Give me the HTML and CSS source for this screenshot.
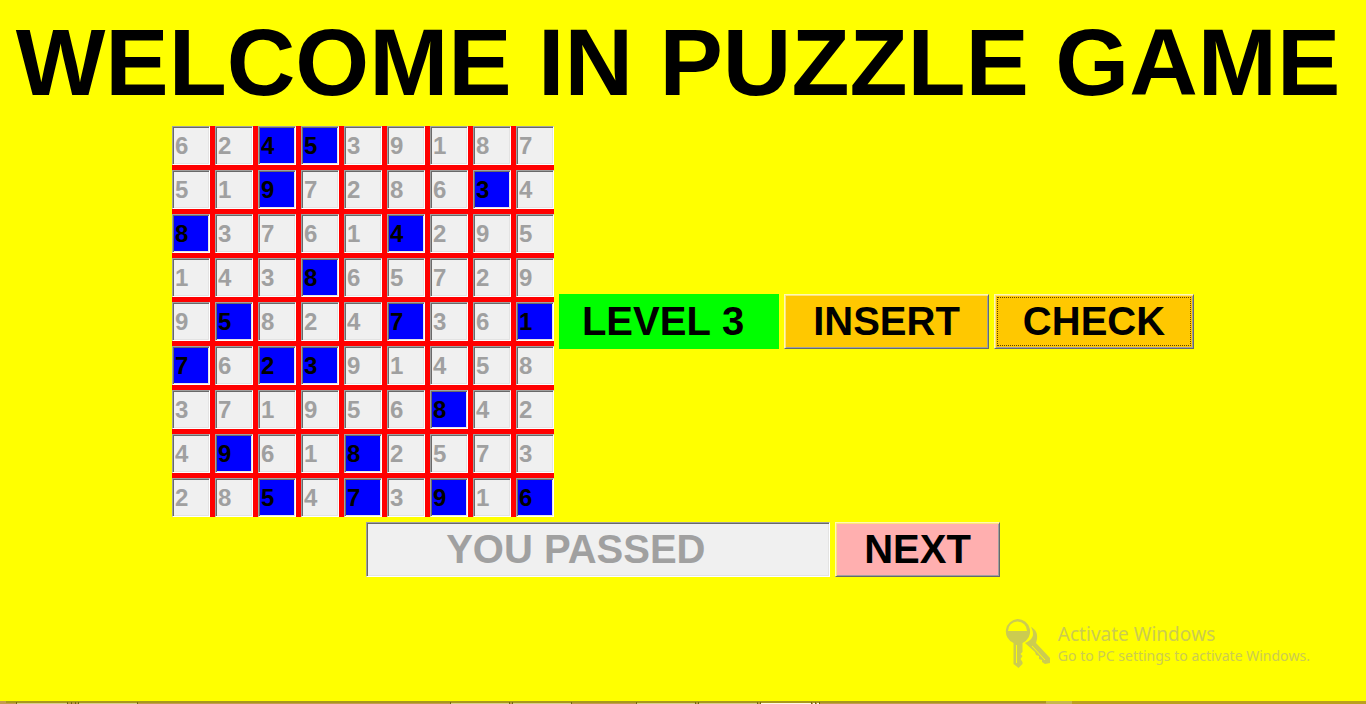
FILE: index.html
```html
<!DOCTYPE html>
<html lang="en">
<head>
<meta charset="utf-8">
<meta name="viewport" content="width=device-width, initial-scale=1">
<title>Puzzle Game</title>
<link rel="stylesheet" href="styles.css">
</head>
<body>
<main class="game">
  <h1 class="title">WELCOME IN PUZZLE GAME</h1>
  <div class="row">
    <div class="board" id="board"></div>
    <div class="level">LEVEL 3</div>
    <button class="button button-action" type="button">INSERT</button>
    <button class="button button-action button-focused" type="button">CHECK</button>
  </div>
  <div class="row">
    <input class="message" type="text" aria-label="Result" value="YOU PASSED" readonly>
    <button class="button button-next" type="button">NEXT</button>
  </div>
</main>
<aside class="activation">
  <svg class="keys" viewBox="0 0 46 50" aria-hidden="true">
    <path fill="currentColor" d="M26 8c4 2 7 6 6 12l-1 4 14 15v5l-5 1-3-2v-2l-3-1v-3l-3-1-1-3-10-9c5-2 8-5 8-9 0-3-1-5-2-7z"/>
    <path fill="none" stroke="#ff0" stroke-width="1" d="M27 27l13 14"/>
    <path fill="currentColor" fill-rule="evenodd" d="M12.500 0a12.500 12.500 0 0 1 5 24v9l-2 2 2 2-2 3 2 3v2l-4 4-5-4V24a12.500 12.500 0 0 1 4-24zM3 12h19a9.500 9.500 0 0 0-19 0z"/>
    <path fill="none" stroke="#ff0" stroke-width="1" d="M11.500 26v18"/>
  </svg>
  <div>
    <p class="activation-title">Activate Windows</p>
    <p class="activation-text">Go to PC settings to activate Windows.</p>
  </div>
</aside>
<footer class="taskbar" aria-hidden="true">
  <svg class="taskbar-edge" viewBox="0 0 1366 3" preserveAspectRatio="none" shape-rendering="crispEdges">
    <path fill="#c49c50" d="M0 0h1366v3H0z"/>
    <path fill="#a89820" d="M6 0h1040v2H6z"/>
    <path fill="#bca020" d="M1072 0h294v3h-294z"/>
    <path fill="#c8b850" d="M1046 0h26v3h-26z"/>
    <path fill="#d8d088" d="M17 2h50v1H17zM79 2h58v1H79zM451 2h58v1h-58zM513 2h58v1h-58zM637 2h58v1h-58zM699 2h58v1h-58z"/>
    <path fill="#fffce0" d="M761 2h50v1h-50zM813 2h2v1h-2zM817 2h2v1h-2z"/>
    <path fill="#706810" d="M16 1h1v2h-1zM67 1h1v2h-1zM71 1h1v2h-1zM75 1h1v2h-1zM78 1h1v2h-1zM137 1h1v2h-1zM450 1h1v2h-1zM509 1h1v2h-1zM512 1h1v2h-1zM571 1h1v2h-1zM636 1h1v2h-1zM695 1h1v2h-1zM698 1h1v2h-1zM757 1h1v2h-1zM760 1h1v2h-1zM811 1h1v2h-1zM815 1h1v2h-1zM819 1h1v2h-1z"/>
  </svg>
</footer>
<script src="board.js"></script>
</body>
</html>
```
FILE: styles.css
```css
* {
  box-sizing: border-box;
}

body {
  margin: 0;
  min-height: 100vh;
  display: flex;
  flex-direction: column;
  position: relative;
  overflow-x: hidden;
  background: #ff0;
  color: #000;
  font-family: "Liberation Sans", Arial, sans-serif;
  font-kerning: none;
}

.game {
  flex: 1;
  padding-top: 4px;
}

.title {
  margin: 0;
  padding: 0 10px 6px 0;
  font-size: 95px;
  line-height: 116px;
  font-weight: bold;
  text-align: center;
  white-space: nowrap;
}

.row {
  display: flex;
  justify-content: center;
  align-items: center;
  gap: 5px;
  margin-bottom: 5px;
}

.board {
  display: grid;
  grid-template-columns: repeat(9, 38px);
  grid-auto-rows: 39px;
  gap: 5px;
  background: #f00;
}

.cell,
.message {
  margin: 0;
  border: 1px solid;
  border-color: #a0a0a0 #fff #fff #a0a0a0;
  border-radius: 0;
  box-shadow: inset 1px 1px #696969, inset -1px -1px #e3e3e3;
  outline: none;
  background: #f0f0f0;
  color: #a0a0a0;
  font-family: inherit;
  font-weight: bold;
}

.cell {
  width: 100%;
  height: 100%;
  min-width: 0;
  padding: 0 2px;
  font-size: 24px;
}

.cell-given {
  background: #00f;
  color: #000;
}

.level,
.button,
.message {
  font-size: 40px;
  line-height: 51px;
  font-weight: bold;
}

.level {
  padding: 2px 35px 2px 23px;
  background: #0f0;
}

.button {
  margin: 0;
  padding: 1px 28px;
  border: 1px solid;
  border-color: #fffbb0 #696969 #696969 #fffbb0;
  border-radius: 0;
  box-shadow: inset 1px 1px #ffe080, inset -1px -1px #a0a0a0;
  color: #000;
  font-family: inherit;
}

.button-action {
  background: #ffc800;
}

.button-next {
  background: #ffafaf;
}

.button-focused {
  outline: 1px dotted #604000;
  outline-offset: -4px;
}

.message {
  width: 464px;
  height: 55px;
  padding: 0 2px 0 79px;
}

.activation {
  position: absolute;
  right: 56px;
  bottom: 35px;
  display: flex;
  align-items: center;
  gap: 7px;
  color: #cccc50;
  font-family: "Noto Sans", "Open Sans", sans-serif;
}

.keys {
  width: 46px;
  height: 50px;
}

.activation p {
  margin: 0;
  white-space: nowrap;
}

.activation .activation-title {
  font-size: 19px;
  line-height: 24px;
}

.activation .activation-text {
  font-size: 14px;
  line-height: 20px;
}

.taskbar {
  height: 3px;
}

.taskbar-edge {
  display: block;
  width: 100%;
  height: 3px;
}
```
FILE: board.js
```js
// An asterisk follows each number that is highlighted in blue.
const rows = [
  "6 2 4* 5* 3 9 1 8 7",
  "5 1 9* 7 2 8 6 3* 4",
  "8* 3 7 6 1 4* 2 9 5",
  "1 4 3 8* 6 5 7 2 9",
  "9 5* 8 2 4 7* 3 6 1*",
  "7* 6 2* 3* 9 1 4 5 8",
  "3 7 1 9 5 6 8* 4 2",
  "4 9* 6 1 8* 2 5 7 3",
  "2 8 5* 4 7* 3 9* 1 6*"
];

const board = document.getElementById("board");
rows.forEach((row, r) => {
  row.split(" ").forEach((entry, c) => {
    const cell = document.createElement("input");
    cell.type = "text";
    cell.readOnly = true;
    cell.value = entry[0];
    cell.className = entry.endsWith("*") ? "cell cell-given" : "cell";
    cell.setAttribute("aria-label", `Row ${r + 1}, column ${c + 1}`);
    board.append(cell);
  });
});
```
